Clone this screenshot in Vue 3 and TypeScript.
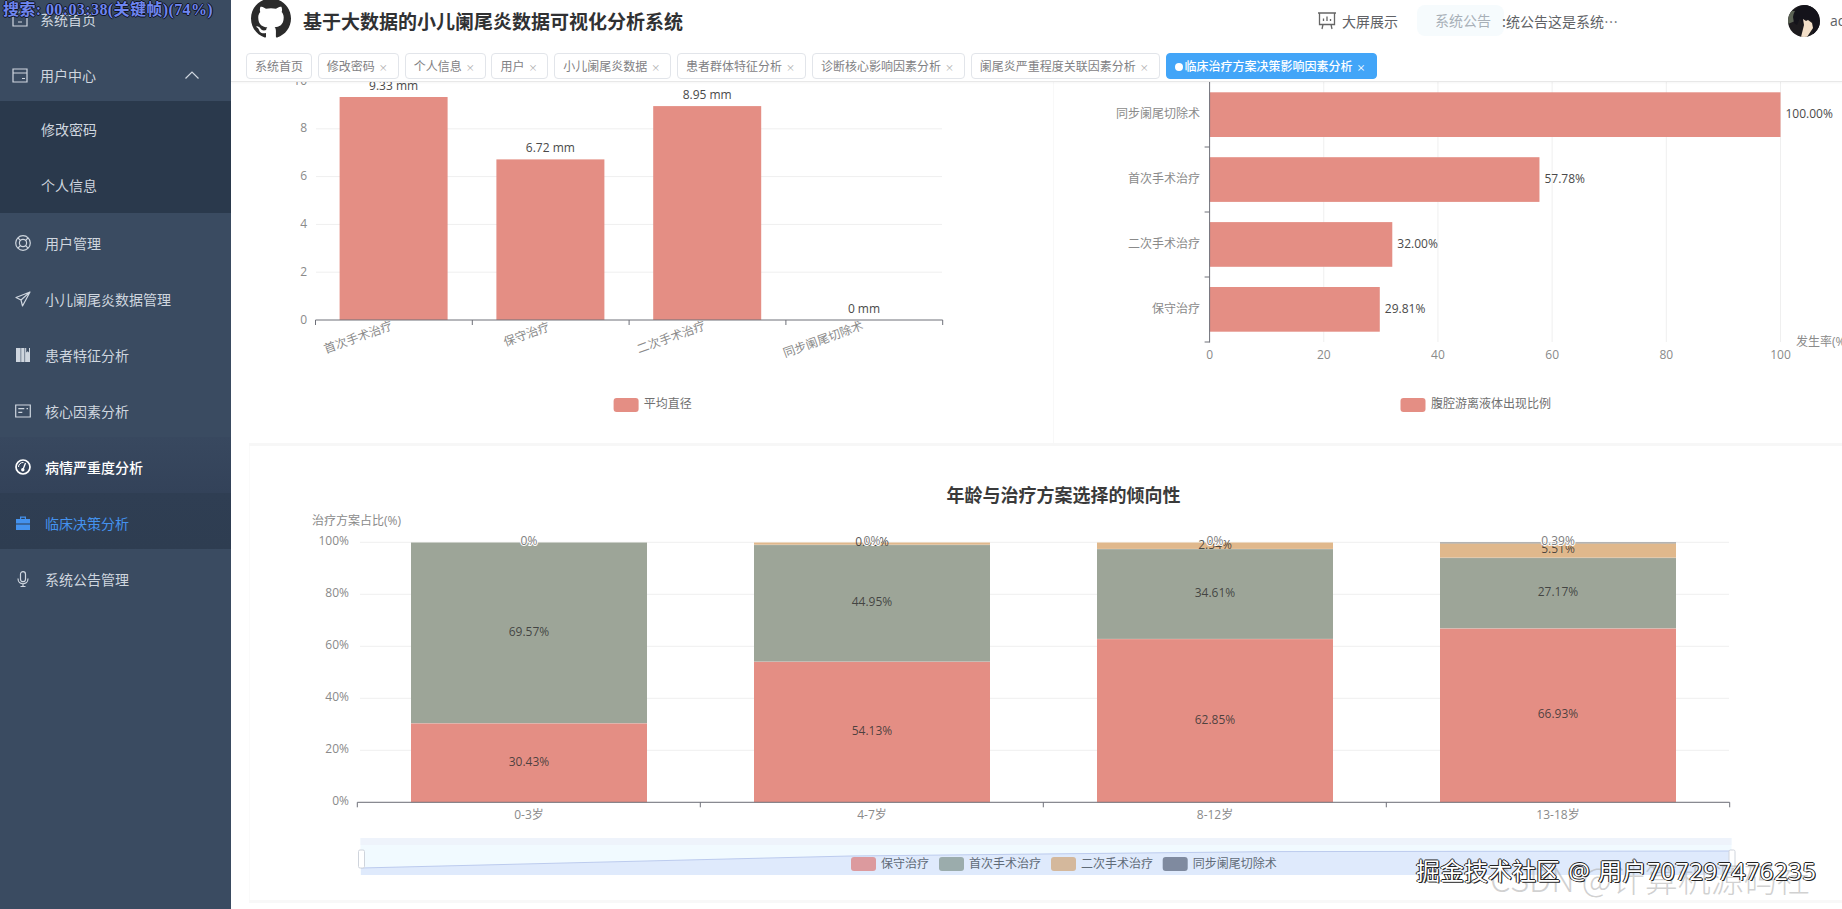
<template>
  <div class="app">
    <aside class="sidebar">
      <div class="menu">
        <div class="item item-plain">
          <svg class="icon" viewBox="0 0 16 16"><path d="M1 1h14v14H1zM6 11h4" fill="none" stroke="currentColor" stroke-width="1.2" /></svg>
          <span>系统首页</span>
        </div>
        <div class="item item-plain">
          <svg class="icon" viewBox="0 0 16 16"><path d="M1 2h14v13H1zM1 6h14M10 11.5h3" fill="none" stroke="currentColor" stroke-width="1.2" /></svg>
          <span>用户中心</span>
          <svg class="arrow" viewBox="0 0 14 8"><path d="M.5 7.5 7 1l6.5 6.500" fill="none" stroke="currentColor" stroke-width="1.2" /></svg>
        </div>
        <div class="submenu">
          <div class="subitem">修改密码</div>
          <div class="subitem">个人信息</div>
        </div>
        <div v-for="m in menus" :key="m.label" class="item" :class="m.cls">
          <svg class="icon icon-wide" viewBox="0 0 16 16" v-html="m.icon"></svg>
          <span>{{ m.label }}</span>
        </div>
      </div>
    </aside>

    <div class="main">
      <header class="header">
        <svg class="logo" viewBox="0 0 24 24"><path fill="#2b2b2b" d="M12 .297c-6.63 0-12 5.373-12 12 0 5.303 3.438 9.8 8.205 11.385.6.113.82-.258.82-.577 0-.285-.01-1.04-.015-2.04-3.338.724-4.042-1.61-4.042-1.61C4.422 18.07 3.633 17.7 3.633 17.7c-1.087-.744.084-.729.084-.729 1.205.084 1.838 1.236 1.838 1.236 1.07 1.835 2.809 1.305 3.495.998.108-.776.417-1.305.76-1.605-2.665-.3-5.466-1.332-5.466-5.93 0-1.31.465-2.38 1.235-3.22-.135-.303-.54-1.523.105-3.176 0 0 1.005-.322 3.3 1.23.96-.267 1.98-.399 3-.405 1.02.006 2.04.138 3 .405 2.28-1.552 3.285-1.23 3.285-1.23.645 1.653.24 2.873.12 3.176.765.84 1.23 1.91 1.23 3.22 0 4.61-2.805 5.625-5.475 5.92.42.36.81 1.096.81 2.22 0 1.606-.015 2.896-.015 3.286 0 .315.21.69.825.57C20.565 22.092 24 17.592 24 12.297c0-6.627-5.373-12-12-12" /></svg>
        <h1 class="title">基于大数据的小儿阑尾炎数据可视化分析系统</h1>
        <div class="screen">
          <svg class="screen-icon" viewBox="0 0 18 18"><path d="M0 1h18M1.500 1v11.500h15V1M5 12.500 4 17M13 12.500l1 4.500M5.500 9V6.500M9 9V4.500M12.500 9V7" fill="none" stroke="#666" stroke-width="1.300" /></svg>
          <span>大屏展示</span>
        </div>
        <div class="notice">
          <span class="notice-label">系统公告</span>
          <span class="notice-text">:统公告这是系统…</span>
        </div>
        <div class="user">
          <svg class="avatar" viewBox="0 0 32 32">
            <defs>
              <clipPath id="avatarClip"><circle cx="16" cy="16" r="16" /></clipPath>
            </defs>
            <g clip-path="url(#avatarClip)">
              <rect width="32" height="32" fill="#1d1b1e" />
              <path d="M0 6h9l-2 10-7 3z" fill="#5b6254" />
              <path d="M5 12C6 4 12 0 18 0c7 0 12 5 13 12l1 9-7 9 0-13-3-2-5-1-3 5-2-6-3 7-3-2z" fill="#14131a" />
              <path d="M15 14l3 2 2-1 4 3 1 5-4 6-2 3h-6l2-8 1-4z" fill="#f3dfc8" />
            </g>
          </svg>
          <span class="user-name">admin</span>
        </div>
      </header>

      <nav class="tabs">
        <div v-for="t in tabs" :key="t.label" class="tab" :class="{ active: t.active }">
          <i v-if="t.active" class="dot"></i>{{ t.label }}<span v-if="t.close" class="close">×</span>
        </div>
      </nav>

      <section class="content">
        <div class="row">
          <div class="card card-left">
            <svg class="chart" width="800" height="360" viewBox="249 82 800 360">
              <line v-for="v in [2, 4, 6, 8, 10]" :key="v" x1="316" :x2="942" :y1="diaY(v)" :y2="diaY(v)" class="grid" />
              <text v-for="v in [0, 2, 4, 6, 8, 10]" :key="v" x="307" :y="diaY(v) - 1" class="tick end">{{ v }}</text>
              <template v-for="(d, i) in diameter" :key="d.name">
                <rect :x="339.600 + i * 156.800" :y="diaY(d.value)" width="108" :height="320 - diaY(d.value)" fill="#e48e84" />
                <text :x="393.600 + i * 156.800" :y="diaY(d.value) - 12" class="value mid">{{ d.value }} mm</text>
                <text :x="d.cx" :y="d.cy" class="tick mid" :transform="`rotate(-20 ${d.cx} ${d.cy})`">{{ d.name }}</text>
                <line :x1="315.500 + i * 156.800" :x2="315.500 + i * 156.800" y1="320" y2="325" class="axis" />
              </template>
              <line x1="315.500" x2="942.700" y1="320" y2="320" class="axis" />
              <line x1="942.700" x2="942.700" y1="320" y2="325" class="axis" />
              <rect x="613.600" y="398" width="25" height="14" rx="3" fill="#e48e84" />
              <text x="643.700" y="403.500" class="legend">平均直径</text>
            </svg>
          </div>
          <div class="card card-right">
            <svg class="chart" width="789" height="360" viewBox="1053 82 789 360">
              <line v-for="v in [20, 40, 60, 80, 100]" :key="v" :x1="rateX(v)" :x2="rateX(v)" y1="82" y2="342" class="grid" />
              <text v-for="v in [0, 20, 40, 60, 80, 100]" :key="v" :x="rateX(v)" y="354" class="tick mid">{{ v }}</text>
              <template v-for="(d, i) in fluid" :key="d.name">
                <rect x="1209.600" :y="92.300 + i * 64.900" :width="rateX(d.value) - 1209.600" height="44.700" fill="#e48e84" />
                <text x="1200" :y="113.500 + i * 64.900" class="tick end">{{ d.name }}</text>
                <text :x="rateX(d.value) + 5" :y="113.500 + i * 64.900" class="value">{{ d.value.toFixed(2) }}%</text>
                <line x1="1204.600" x2="1209.600" :y1="147 + i * 65" :y2="147 + i * 65" class="axis" />
              </template>
              <line x1="1209.600" x2="1209.600" y1="82" y2="342.500" class="axis" />
              <text x="1796" y="341" class="tick">发生率(%)</text>
              <rect x="1400.500" y="398" width="25" height="14" rx="3" fill="#e48e84" />
              <text x="1431" y="403.500" class="legend">腹腔游离液体出现比例</text>
            </svg>
          </div>
        </div>

        <div class="card card-wide">
          <svg class="chart" width="1593" height="454" viewBox="249 446 1593 454">
            <text x="1063.500" y="495" class="chart-title">年龄与治疗方案选择的倾向性</text>
            <text x="312" y="520" class="tick">治疗方案占比(%)</text>
            <template v-for="v in [0, 20, 40, 60, 80, 100]" :key="v">
              <line x1="360" x2="1729" :y1="pctY(v)" :y2="pctY(v)" class="grid" />
              <text x="349" :y="pctY(v) - 2" class="tick end">{{ v }}%</text>
            </template>
            <g v-for="(g, i) in stacks" :key="g.name">
              <template v-for="s in segments(g.values)" :key="s.key">
                <rect :x="411 + i * 343" :y="s.y" width="236" :height="s.h" :fill="s.color" />
                <line v-if="s.h > 1" :x1="411 + i * 343" :x2="647 + i * 343" :y1="s.y" :y2="s.y" class="seam" />
              </template>
              <template v-for="s in segments(g.values)" :key="s.key + 'l'">
                <text :x="529 + i * 343" :y="s.labelY" class="seg mid" :class="{ ghost: s.ghost }">{{ s.label }}</text>
              </template>
              <text :x="529 + i * 343" y="814.500" class="tick mid">{{ g.name }}</text>
              <line :x1="357.300 + i * 343" :x2="357.300 + i * 343" y1="802.300" y2="807.300" class="axis" />
            </g>
            <line x1="357.300" x2="1729.700" y1="802.300" y2="802.300" class="axis" />
            <line x1="1729.700" x2="1729.700" y1="802.300" y2="807.300" class="axis" />

            <rect x="360.500" y="838" width="1371" height="37" fill="#f1faff" />
            <rect x="360.500" y="838" width="1371" height="7" fill="#eef3fb" />
            <polygon points="361,868 850,856 1273,851.600 1732,851 1732,875 361,875" fill="#dfeafc" />
            <polyline points="361,868 850,856 1273,851.600 1732,851" fill="none" stroke="#bccbee" />
            <rect x="358.500" y="850" width="6" height="18" rx="1.500" fill="#fff" stroke="#cfd4dc" />
            <rect x="1729" y="850" width="6" height="18" rx="1.500" fill="#fff" stroke="#cfd4dc" />
            <template v-for="l in zoomLegend" :key="l.label">
              <rect :x="l.x" y="857" width="25" height="14" rx="3" :fill="l.color" />
              <text :x="l.x + 30" y="863.500" class="legend legend-zoom">{{ l.label }}</text>
            </template>
          </svg>
        </div>
      </section>
    </div>

    <div class="video-tip">搜索: 00:03:38(关键帧)(74%)</div>
    <div class="mark-csdn">CSDN @计算机源码社</div>
    <div class="mark-juejin">掘金技术社区 @ <span class="mark-user">用户707297476235</span></div>
  </div>
</template>

<script setup lang="ts">
interface Menu {
  label: string
  icon: string
  cls?: string
}

const menus: Menu[] = [
  {
    label: '用户管理',
    icon: '<g fill="none" stroke="currentColor" stroke-width="1.2"><circle cx="8" cy="8" r="7.300"/><circle cx="8" cy="8" r="3.600"/><path d="M2.900 2.900 5.500 5.500M13.100 2.900 10.500 5.500M2.900 13.100 5.500 10.500M13.100 13.100 10.500 10.500"/></g>',
  },
  {
    label: '小儿阑尾炎数据管理',
    icon: '<path d="M15 1 1 6.500l5 2.500 1.500 6L15 1zM6 9l9-8" fill="none" stroke="currentColor" stroke-width="1.2" stroke-linejoin="round"/>',
  },
  {
    // three book spines, the last with a bookmark notch
    label: '患者特征分析',
    icon: '<path d="M1 1h4.600v14H1zM6.200 1h3.300v14H6.200zM10.100 1h1.100v4.500l1.500-1.300 1.300 1.300V1H15v14h-4.900z" fill="currentColor"/>',
  },
  {
    label: '核心因素分析',
    icon: '<path d="M.7 2h14.600v12H.7z" fill="none" stroke="currentColor" stroke-width="1.200"/><path d="M3.300 5.700h6M3.300 9.300h4M11.500 5.700h1.500" stroke="currentColor" stroke-width="1.300" fill="none"/>',
  },
  {
    label: '病情严重度分析',
    cls: 'item-open',
    icon: '<circle cx="8" cy="8" r="7" fill="none" stroke="#fff" stroke-width="1.700"/><path d="M3.500 8a4.500 4.500 0 0 1 5-4.500" fill="none" stroke="#fff" stroke-width="1"/><path d="M10.500 4 8.200 10" stroke="#fff" stroke-width="1.300"/><circle cx="7.800" cy="10.800" r="1.700" fill="#fff"/>',
  },
  {
    label: '临床决策分析',
    cls: 'item-active',
    icon: '<path d="M5 4V1.500h6V4h4v4.500H1V4zM6.200 4h3.600V2.800H6.200zM1 9.500h14V15H1z" fill="currentColor" fill-rule="evenodd"/>',
  },
  {
    label: '系统公告管理',
    icon: '<g fill="none" stroke="currentColor" stroke-width="1.2"><rect x="5.500" y="0.700" width="5" height="10" rx="2.500"/><path d="M3 7.500c0 7 10 7 10 0M8 13v2.500M5.500 15.500h5"/></g>',
  },
]

const tabs = [
  { label: '系统首页', close: false },
  { label: '修改密码', close: true },
  { label: '个人信息', close: true },
  { label: '用户', close: true },
  { label: '小儿阑尾炎数据', close: true },
  { label: '患者群体特征分析', close: true },
  { label: '诊断核心影响因素分析', close: true },
  { label: '阑尾炎严重程度关联因素分析', close: true },
  { label: '临床治疗方案决策影响因素分析', close: true, active: true },
]

const diameter = [
  { name: '首次手术治疗', value: 9.33, cx: 358, cy: 337 },
  { name: '保守治疗', value: 6.72, cx: 526.500, cy: 334 },
  { name: '二次手术治疗', value: 8.95, cx: 671, cy: 337 },
  { name: '同步阑尾切除术', value: 0, cx: 823, cy: 339 },
]

const fluid = [
  { name: '同步阑尾切除术', value: 100 },
  { name: '首次手术治疗', value: 57.78 },
  { name: '二次手术治疗', value: 32 },
  { name: '保守治疗', value: 29.81 },
]

const stacks = [
  { name: '0-3岁', values: [30.43, 69.57, 0, 0] },
  { name: '4-7岁', values: [54.13, 44.95, 0.92, 0] },
  { name: '8-12岁', values: [62.85, 34.61, 2.54, 0] },
  { name: '13-18岁', values: [66.93, 27.17, 5.51, 0.39] },
]

const stackColors = ['#e48e84', '#9da598', '#e0b88c', '#6f7070']

const zoomLegend = [
  { label: '保守治疗', x: 851, color: '#dc9a9e' },
  { label: '首次手术治疗', x: 939, color: '#9bacac' },
  { label: '二次手术治疗', x: 1051, color: '#d4b89c' },
  { label: '同步阑尾切除术', x: 1162.700, color: '#7f8a9f' },
]

const diaY = (v: number) => 320 - v * 23.9
const rateX = (v: number) => 1209.6 + v * 5.709
const pctY = (v: number) => 802.3 - v * 2.6

const segments = (values: number[]) => {
  let base = 0
  return values.map((v, i) => {
    const y = pctY(base + v)
    const h = v * 2.6
    base += v
    return {
      key: `s${i}`,
      y,
      h,
      color: stackColors[i],
      labelY: i === 3 ? 540 : y + h / 2 - 1.5,
      label: `${v}%`,
      ghost: i === 3,
    }
  })
}
</script>

<style scoped>
.app {
  display: flex;
  width: 1842px;
  height: 909px;
  overflow: hidden;
  position: relative;
  background: #fff;
  font-family: "Noto Sans CJK SC", "Liberation Sans", sans-serif;
}

.sidebar {
  width: 231px;
  flex: none;
  background: #3a4b61;
  color: #cfd6df;
  font-size: 14px;
  overflow: hidden;
}

.menu {
  margin-top: -11px;
}

.item {
  height: 56px;
  padding: 4px 0 0 15px;
  box-sizing: border-box;
  display: flex;
  align-items: center;
  gap: 14px;
  position: relative;
}

.item-plain {
  padding-left: 12px;
  gap: 12px;
}

.icon {
  width: 16px;
  height: 16px;
  flex: none;
}

.arrow {
  width: 14px;
  height: 8px;
  position: absolute;
  left: 185px;
  top: 26px;
}

.submenu {
  background: #2a394c;
}

.subitem {
  height: 56px;
  padding: 0 0 0 41px;
  box-sizing: border-box;
  display: flex;
  align-items: center;
}

.item-open {
  color: #fff;
  font-weight: 500;
  background: linear-gradient(#38485f, #334259);
}

.item-active {
  color: #4492ee;
  background: linear-gradient(#2f3e53, #2e3d51);
}

.main {
  flex: 1;
  min-width: 0;
  display: flex;
  flex-direction: column;
}

.header {
  height: 41px;
  padding: 0 0 4px 20px;
  flex: none;
  display: flex;
  align-items: center;
  color: #606266;
  font-size: 14px;
}

.logo {
  width: 40px;
  height: 40px;
  flex: none;
  margin-bottom: 5px;
}

.title {
  margin: 0 0 0 12px;
  font-size: 19px;
  line-height: 1;
  font-weight: 700;
  color: #303133;
  width: 1015px;
}

.screen {
  display: flex;
  align-items: center;
  gap: 6px;
  width: 80px;
  flex: none;
  white-space: nowrap;
}

.screen-icon {
  width: 18px;
  height: 18px;
}

.notice {
  margin-left: 19px;
  width: 201px;
  flex: none;
  display: flex;
  align-items: center;
}

.notice-label {
  width: 90px;
  height: 31px;
  padding-left: 18px;
  box-sizing: border-box;
  line-height: 31px;
  color: #a8b0b8;
  background: #f6fbfd;
  border-radius: 8px;
}

.notice-text {
  margin-left: -2px;
  white-space: nowrap;
}

.user {
  margin-left: 170px;
  width: 54px;
  flex: none;
  display: flex;
  align-items: center;
  overflow: hidden;
  white-space: nowrap;
  font-family: "Open Sans", sans-serif;
}

.avatar {
  width: 32px;
  height: 32px;
  flex: none;
  margin-right: 10px;
}

.tabs {
  height: 37px;
  flex: none;
  box-sizing: border-box;
  padding: 8px 0 0 15px;
  display: flex;
  gap: 5.800px;
  border-bottom: 1px solid #e8e8e8;
  box-shadow: 0 1px 2px rgba(0, 0, 0, 0.04);
  position: relative;
  z-index: 1;
  background: #fff;
}

.tab {
  height: 26px;
  box-sizing: border-box;
  padding: 0 8px;
  border: 1px solid #e2e5ea;
  border-radius: 4px;
  font-size: 12px;
  line-height: 24px;
  color: #7f8184;
  white-space: nowrap;
}

.close {
  display: inline-block;
  width: 11px;
  margin: 0 1px 0 3px;
  text-align: center;
  font-size: 9px;
  color: #a9a9a9;
}

.tab.active {
  background: #42a5f8;
  border-color: #42a5f8;
  color: #fff;
  font-weight: 500;
}

.tab.active .close {
  color: #fff;
}

.dot {
  display: inline-block;
  width: 8px;
  height: 8px;
  margin-right: 2px;
  border-radius: 50%;
  background: #fff;
}

.content {
  flex: 1;
  min-height: 0;
  overflow: hidden;
  padding-left: 18px;
}

.row {
  display: flex;
  gap: 4px;
  height: 361px;
  border-bottom: 3px solid #f7f7f7;
}

.card-left {
  width: 800px;
  flex: none;
}

.card-right {
  flex: 1;
  min-width: 0;
  box-shadow: inset 1px 0 0 #f8f8f8;
}

.card-wide {
  border-bottom: 3px solid #f8f8f8;
  box-shadow: inset 1px 0 0 #fafafa;
}

.chart {
  display: block;
  font-family: "Open Sans", "Noto Sans CJK SC", sans-serif;
}

.grid {
  stroke: #efefef;
  stroke-width: 1;
}

.axis {
  stroke: #6e7079;
  stroke-width: 1;
}

.seam {
  stroke: #fff;
  stroke-opacity: 0.35;
}

.tick {
  font-size: 12px;
  fill: #8a8a8a;
  dominant-baseline: central;
}

.value {
  font-size: 12px;
  fill: #4a4a4a;
  dominant-baseline: central;
}

.end {
  text-anchor: end;
}

.mid {
  text-anchor: middle;
}

.legend {
  font-size: 12px;
  fill: #707070;
  dominant-baseline: central;
}

.legend-zoom {
  fill: #5f6b78;
}

.chart-title {
  font-size: 18px;
  font-weight: 700;
  fill: #3a3a3a;
  text-anchor: middle;
  dominant-baseline: central;
}

.seg {
  font-size: 12px;
  fill: #333;
  fill-opacity: 0.85;
  dominant-baseline: central;
}

.seg.ghost {
  fill: #7d7d7d;
  fill-opacity: 1;
  stroke: #fff;
  stroke-width: 2px;
  paint-order: stroke;
}

.video-tip {
  position: absolute;
  left: 3px;
  top: 0;
  font-family: "Liberation Serif", "Noto Sans CJK SC", serif;
  font-size: 16px;
  font-weight: 700;
  letter-spacing: 0.4px;
  line-height: 20px;
  color: #6f86f0;
  white-space: nowrap;
  text-shadow: 1px 0 0 #10131f, -1px 0 0 #10131f, 0 1px 0 #10131f, 0 -1px 0 #10131f;
}

.mark-csdn {
  position: absolute;
  left: 1490px;
  top: 855px;
  font-size: 33px;
  line-height: 46px;
  font-weight: 300;
  color: rgba(170, 170, 170, 0.55);
  white-space: nowrap;
}

.mark-juejin {
  position: absolute;
  left: 1416px;
  top: 853px;
  font-family: "Open Sans", "Noto Sans CJK SC", sans-serif;
  font-size: 24px;
  line-height: 36px;
  word-spacing: 2px;
  color: #fff;
  white-space: nowrap;
  text-shadow: 1px 1px 0 #222, -1px 0 0 #222, 0 -1px 0 #222, 1px 0 0 #222;
}

.mark-user {
  letter-spacing: 0.4px;
}
</style>

<style>
body {
  background: #fff;
}
</style>
